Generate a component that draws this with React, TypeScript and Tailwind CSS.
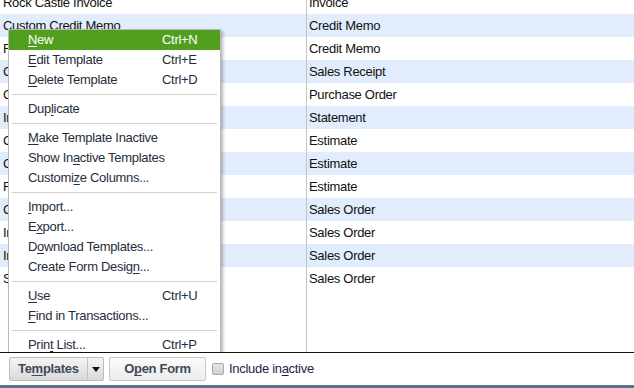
import React from "react";

const rows = [
  ["Rock Castle Invoice", "Invoice"],
  ["Custom Credit Memo", "Credit Memo"],
  ["Rock Castle Credit Memo", "Credit Memo"],
  ["Custom Sales Receipt", "Sales Receipt"],
  ["Custom Purchase Order", "Purchase Order"],
  ["Intuit Standard Statement", "Statement"],
  ["Custom Estimate", "Estimate"],
  ["Custom Job Estimate", "Estimate"],
  ["Fixed Fee Estimate", "Estimate"],
  ["Custom Sales Order", "Sales Order"],
  ["Intuit Sales Order", "Sales Order"],
  ["Intuit Packing Slip", "Sales Order"],
  ["Sales Order with Rep", "Sales Order"],
];

type Item = { pre: string; key: string; post: string; shortcut?: string; active?: boolean } | "sep";

const menu: Item[] = [
  { pre: "", key: "N", post: "ew", shortcut: "Ctrl+N", active: true },
  { pre: "", key: "E", post: "dit Template", shortcut: "Ctrl+E" },
  { pre: "", key: "D", post: "elete Template", shortcut: "Ctrl+D" },
  "sep",
  { pre: "Dup", key: "l", post: "icate" },
  "sep",
  { pre: "", key: "M", post: "ake Template Inactive" },
  { pre: "Show In", key: "a", post: "ctive Templates" },
  { pre: "Customi", key: "z", post: "e Columns..." },
  "sep",
  { pre: "", key: "I", post: "mport..." },
  { pre: "E", key: "x", post: "port..." },
  { pre: "D", key: "o", post: "wnload Templates..." },
  { pre: "Create Form Desig", key: "n", post: "..." },
  "sep",
  { pre: "", key: "U", post: "se", shortcut: "Ctrl+U" },
  { pre: "", key: "F", post: "ind in Transactions..." },
  "sep",
  { pre: "Prin", key: "t", post: " List...", shortcut: "Ctrl+P" },
];

function TemplateMenu() {
  return (
    <div className="absolute left-[8px] top-[29px] w-[213px] border border-[#b9b9b9] bg-white pb-[1px] shadow-[2px_2px_3px_rgba(0,0,0,0.28)]">
      {menu.map((m, i) =>
        m === "sep" ? (
          <div key={i} className="flex h-[9px] items-center px-[3px]">
            <div className="h-px w-full bg-[#d0d0d0]" />
          </div>
        ) : (
          <div
            key={i}
            className={`flex h-5 items-center whitespace-nowrap pl-[19px] ${m.active ? "bg-[#519f1e] text-white" : "text-[#262e3d]"}`}
          >
            <span className="w-[134px] shrink-0">
              {m.pre}
              <u className="underline-offset-2">{m.key}</u>
              {m.post}
            </span>
            <span>{m.shortcut}</span>
          </div>
        )
      )}
    </div>
  );
}

export default function App() {
  return (
    <div
      className="flex h-[388px] w-[634px] flex-col overflow-hidden bg-white text-[13px] tracking-[-0.3px]"
      style={{ fontFamily: '"Liberation Sans", Arial, sans-serif' }}
    >
      <div className="relative h-[353px] overflow-hidden">
        <div className="mt-[-9px]">
          {rows.map(([name, type], i) => (
            <div key={i} className={`flex h-[23px] items-center text-[#111] ${i % 2 ? "bg-[#e1ecfc]" : "bg-white"}`}>
              <div className="w-[306px] whitespace-nowrap pl-[3px]">{name}</div>
              <div className="whitespace-nowrap pl-[3px]">{type}</div>
            </div>
          ))}
        </div>
        <div className="absolute bottom-0 left-[306px] top-0 w-px bg-[#c4c4c4]" />
        <TemplateMenu />
      </div>
      <div className="h-px bg-[#111]" />
      <div className="flex h-[32px] items-center pl-[9px]">
        <div className="flex h-6 w-[95px] rounded-[2px] border border-[#bdbdbd] bg-gradient-to-b from-[#f5f5f5] to-[#d9d9d9] font-bold text-[#3e4a5a]">
          <div className="flex flex-1 items-center pl-[8px]">
            Te<u className="underline-offset-2">m</u>plates
          </div>
          <div className="flex w-[16px] items-center justify-center border-l border-[#c4c4c4]">
            <svg width="8" height="5" viewBox="0 0 8 5">
              <path d="M0 0h8L4 5z" fill="#111" />
            </svg>
          </div>
        </div>
        <div className="ml-[5px] flex h-6 w-[97px] items-center justify-center rounded-[2px] border border-[#c8c8c8] bg-gradient-to-b from-[#fbfbfb] to-[#ececec] font-bold text-[#3e4a5a]">
          O<u className="underline-offset-2">p</u>en Form
        </div>
        <div className="ml-[6px] h-3 w-3 rounded-[2px] border border-[#a9a9a9] bg-gradient-to-b from-[#e6e6e6] to-[#cfcfcf]" />
        <span className="ml-[5px] text-[#1d1d4d]">
          Include in<u className="underline-offset-2">a</u>ctive
        </span>
      </div>
      <div className="h-[3px] bg-[#5b7387]" />
    </div>
  );
}
